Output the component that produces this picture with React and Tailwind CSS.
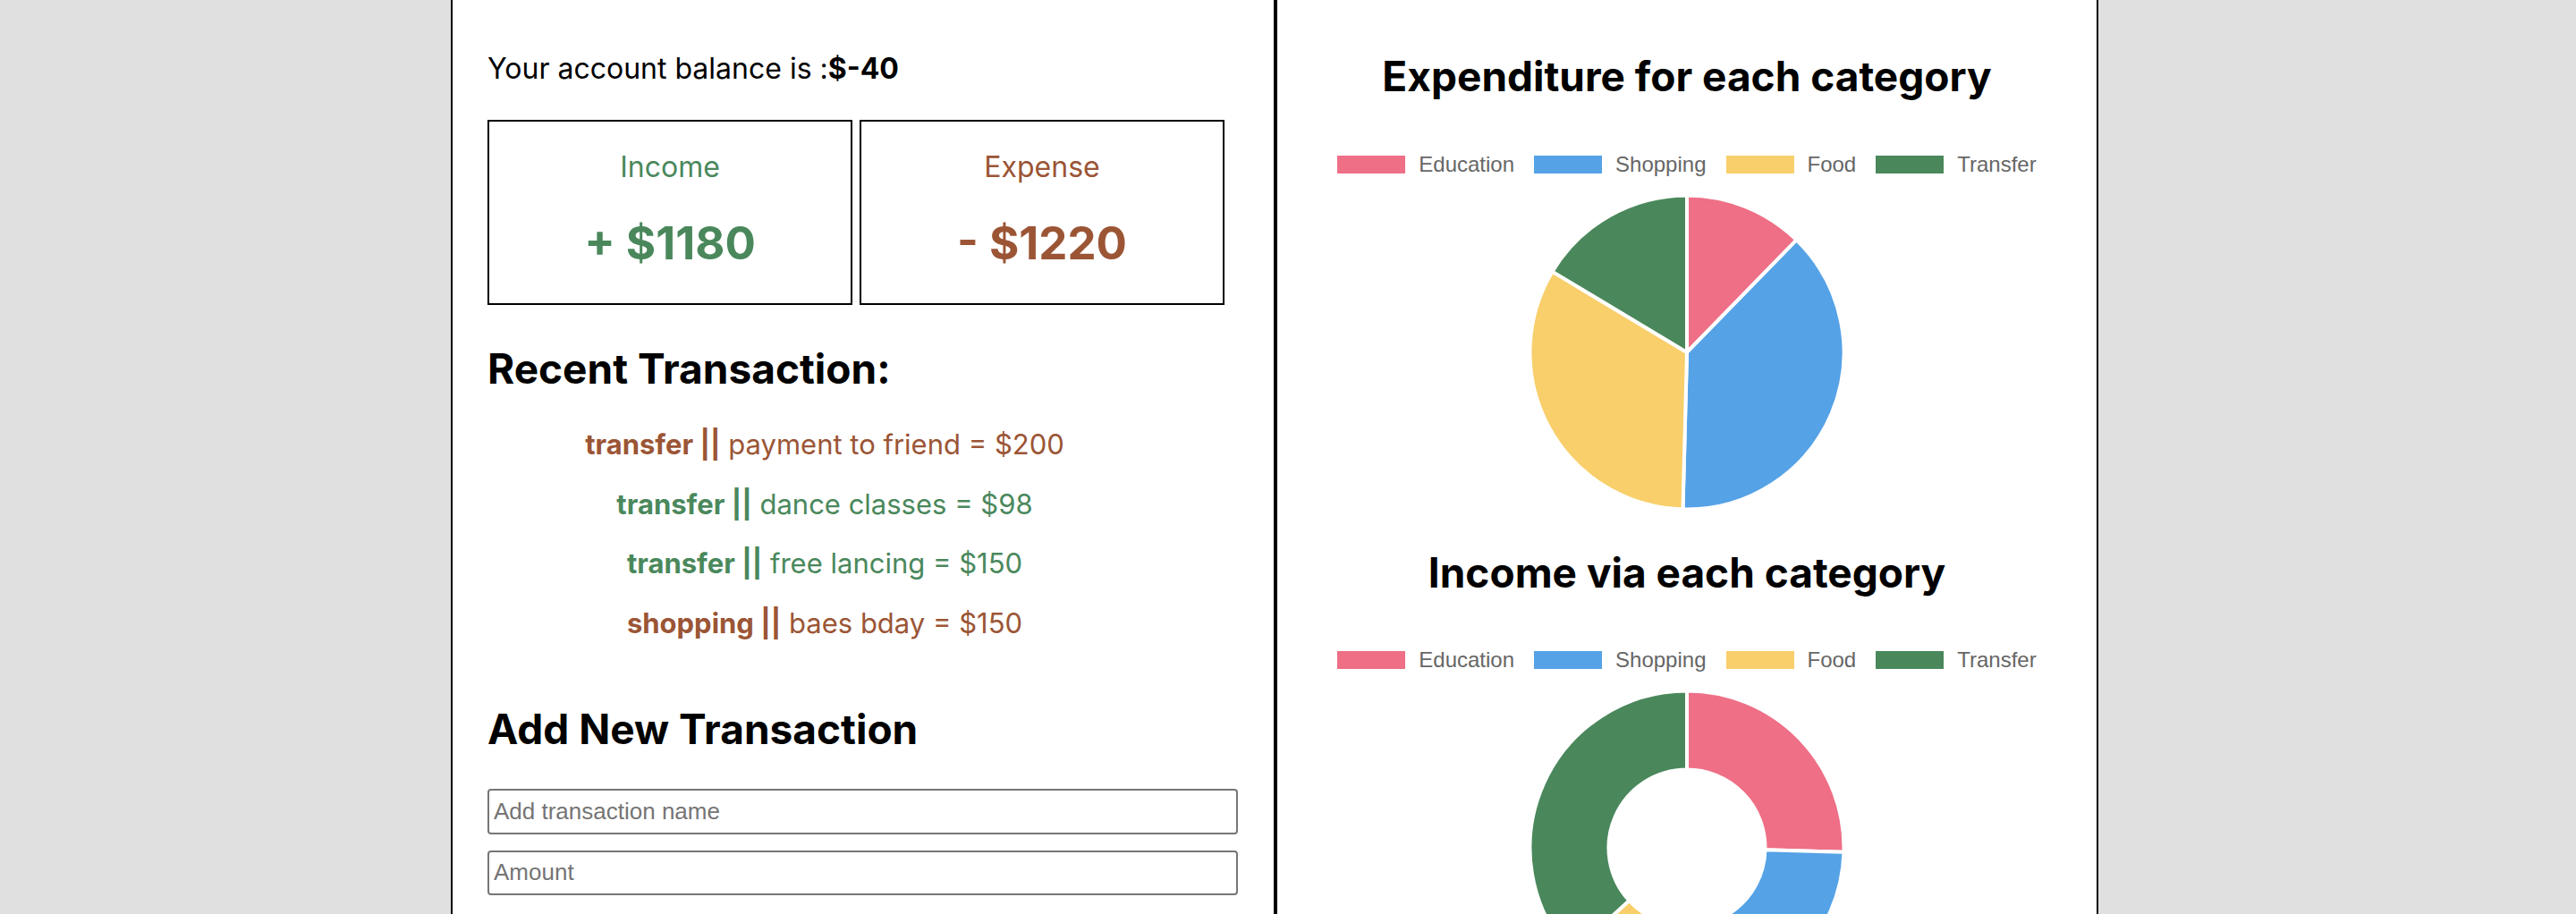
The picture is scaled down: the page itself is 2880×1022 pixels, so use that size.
import React from "react";

const COLORS = {
  pink: "#EE6F86",
  blue: "#55A2E6",
  yellow: "#F8CF6B",
  green: "#4A885C",
};

const CATS = [
  { label: "Education", color: COLORS.pink },
  { label: "Shopping", color: COLORS.blue },
  { label: "Food", color: COLORS.yellow },
  { label: "Transfer", color: COLORS.green },
];

function pt(cx, cy, r, a) {
  const rad = (a * Math.PI) / 180;
  return [cx + r * Math.sin(rad), cy - r * Math.cos(rad)];
}

function arcPath(cx, cy, r, r0, a0, a1) {
  const large = a1 - a0 > 180 ? 1 : 0;
  const [x0, y0] = pt(cx, cy, r, a0);
  const [x1, y1] = pt(cx, cy, r, a1);
  if (!r0) {
    return `M ${cx} ${cy} L ${x0} ${y0} A ${r} ${r} 0 ${large} 1 ${x1} ${y1} Z`;
  }
  const [ix1, iy1] = pt(cx, cy, r0, a1);
  const [ix0, iy0] = pt(cx, cy, r0, a0);
  return `M ${x0} ${y0} A ${r} ${r} 0 ${large} 1 ${x1} ${y1} L ${ix1} ${iy1} A ${r0} ${r0} 0 ${large} 0 ${ix0} ${iy0} Z`;
}

function Pie({ values, inner = 0 }) {
  const total = values.reduce((a, b) => a + b, 0);
  let acc = 0;
  const segs = values.map((v, i) => {
    const a0 = (acc / total) * 360;
    acc += v;
    const a1 = (acc / total) * 360;
    return (
      <path
        key={i}
        d={arcPath(180, 180, 175.5, inner, a0, a1)}
        fill={CATS[i].color}
        stroke="#ffffff"
        strokeWidth="4"
        strokeLinejoin="round"
      />
    );
  });
  return (
    <svg width="360" height="360" viewBox="0 0 360 360" className="block mx-auto">
      {segs}
    </svg>
  );
}

function Legend() {
  return (
    <div className="flex justify-center items-center h-[24px] gap-[22px] font-['Liberation_Sans',Arial,sans-serif] text-[24px] leading-none text-[#666666]">
      {CATS.map((c) => (
        <div key={c.label} className="flex items-center gap-[15px]">
          <span className="block w-[76px] h-[20px]" style={{ backgroundColor: c.color }} />
          <span>{c.label}</span>
        </div>
      ))}
    </div>
  );
}

const TX = [
  { cat: "transfer", desc: "payment to friend", amt: 200, type: "exp" },
  { cat: "transfer", desc: "dance classes", amt: 98, type: "inc" },
  { cat: "transfer", desc: "free lancing", amt: 150, type: "inc" },
  { cat: "shopping", desc: "baes bday", amt: 150, type: "exp" },
];

export default function App() {
  return (
    <div className="min-h-screen bg-[#e0e0e0] font-[Inter,sans-serif] text-black">
      <div className="ml-[504px] w-[1842px] flex bg-white">
        {/* Left panel */}
        <div className="w-[922px] shrink-0 border-x-2 border-black pl-[39px] pr-[40px] pb-[40px]">
          <p className="mt-[61px] text-[32px] leading-none">
            Your account balance is :<span className="font-bold">$-40</span>
          </p>

          <div className="mt-[41px] flex gap-[8px]">
            <div className="w-[408px] h-[207px] border-2 border-black text-center text-[#4A885C] pt-[35px]">
              <div className="text-[32px] leading-none">Income</div>
              <div className="mt-[43px] text-[51px] font-bold leading-none">+ $1180</div>
            </div>
            <div className="w-[408px] h-[207px] border-2 border-black text-center text-[#9B5535] pt-[35px]">
              <div className="text-[32px] leading-none">Expense</div>
              <div className="mt-[43px] text-[51px] font-bold leading-none">- $1220</div>
            </div>
          </div>

          <h2 className="mt-[48px] text-[46px] font-bold leading-none">Recent Transaction:</h2>

          <ul className="mt-[29px] w-[754px] text-center text-[31px] leading-[66.67px]">
            {TX.map((t, i) => (
              <li
                key={i}
                className={t.type === "inc" ? "text-[#4A885C]" : "text-[#9B5535]"}
              >
                <span className="font-bold">{t.cat} ||</span> {t.desc} = ${t.amt}
              </li>
            ))}
          </ul>

          <h2 className="mt-[61px] text-[46px] font-bold leading-none">Add New Transaction</h2>

          <input
            type="text"
            placeholder="Add transaction name"
            className="mt-[44px] block w-[839px] h-[51px] border-2 border-[#767676] rounded-[4px] px-[5px] font-['Liberation_Sans',Arial,sans-serif] text-[26px] placeholder:text-[#757575] outline-none"
          />
          <input
            type="text"
            placeholder="Amount"
            className="mt-[18px] block w-[839px] h-[50px] border-2 border-[#767676] rounded-[4px] px-[5px] font-['Liberation_Sans',Arial,sans-serif] text-[26px] placeholder:text-[#757575] outline-none"
          />
        </div>

        {/* Right panel */}
        <div className="w-[920px] shrink-0 border-x-2 border-black">
          <h2 className="mt-[62px] text-center text-[46px] font-bold leading-none">
            Expenditure for each category
          </h2>
          <div className="mt-[64px]">
            <Legend />
          </div>
          <div className="mt-[18px]">
            <Pie values={[150, 465, 405, 200]} />
          </div>
          <h2 className="mt-[43px] text-center text-[46px] font-bold leading-none">
            Income via each category
          </h2>
          <div className="mt-[63px]">
            <Legend />
          </div>
          <div className="mt-[18px]">
            <Pie values={[300, 380, 66, 434]} inner={87.5} />
          </div>
        </div>
      </div>
    </div>
  );
}
